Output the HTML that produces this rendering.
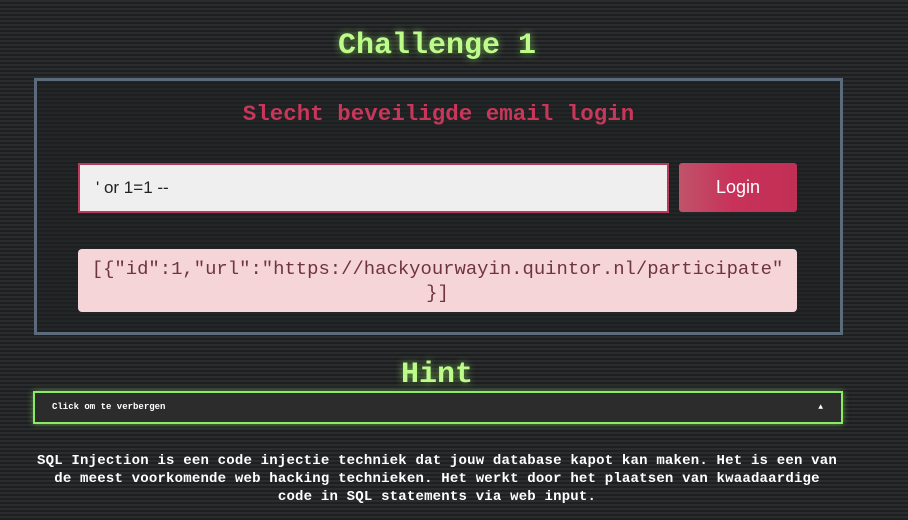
<!DOCTYPE html>
<html><head><meta charset="utf-8"><style>
html,body{margin:0;padding:0}
body{width:908px;height:520px;overflow:hidden;position:relative;
background:#232526;
background-image:repeating-linear-gradient(0deg,#1d1f20 0px,#1d1f20 2px,#2a2c2d 2px,#2a2c2d 4px);
font-family:"Liberation Mono",monospace;}
.t{position:absolute;left:34px;width:806px;text-align:center;color:#bdfb8a;font-weight:bold;font-size:30px;text-shadow:0 0 8px rgba(160,255,100,.6)}
.box{position:absolute;left:34px;top:78px;width:803px;height:251px;border:3px solid #5c6b7c;background:rgba(30,32,34,.55)}
.h2{position:absolute;left:0;top:20px;width:803px;text-align:center;color:#c8365a;font-weight:bold;font-size:22.5px}
.inp{position:absolute;left:41px;top:82px;width:591px;height:50px;border:2px solid #b83b5c;background:#efefef;box-sizing:border-box;font-family:"Liberation Sans",sans-serif;font-size:17px;color:#222;line-height:46px;padding-left:16px}
.btn{position:absolute;left:642px;top:82px;width:118px;height:49px;border-radius:3px;background:linear-gradient(90deg,#c0536a,#c8325a 45%,#c22f55);color:#fff;font-family:"Liberation Sans",sans-serif;font-size:18px;text-align:center;line-height:48px}
.res{position:absolute;left:41px;top:168px;width:719px;height:63px;border-radius:4px;background:#f6d5d9;color:#6e3440;font-size:18.9px;text-align:center;line-height:24px;padding-top:8px;box-sizing:border-box}
.bar{position:absolute;left:33px;top:391px;width:810px;height:33px;border:2px solid #8bec64;box-sizing:border-box;background:#2c2c2c;box-shadow:0 0 6px rgba(140,240,100,.5);color:#fff;font-weight:bold;font-size:9px;line-height:29px;padding-left:17px}
.bar span{position:absolute;right:18px;top:0;font-size:8px}
.p{position:absolute;left:29px;width:816px;top:452px;text-align:center;color:#fff;font-weight:bold;font-size:14px;letter-spacing:0.2px;line-height:18px;white-space:nowrap}
</style></head><body>
<div class="t" style="top:29px">Challenge 1</div>
<div class="box">
<div class="h2">Slecht beveiligde email login</div>
<div class="inp">' or 1=1 --</div>
<div class="btn">Login</div>
<div class="res">[{"id":1,"url":"https://hackyourwayin.quintor.nl/participate"<br>}]</div>
</div>
<div class="t" style="top:358px">Hint</div>
<div class="bar">Click om te verbergen<span>▲</span></div>
<div class="p">SQL Injection is een code injectie techniek dat jouw database kapot kan maken. Het is een van<br>de meest voorkomende web hacking technieken. Het werkt door het plaatsen van kwaadaardige<br>code in SQL statements via web input.</div>
</body></html>
